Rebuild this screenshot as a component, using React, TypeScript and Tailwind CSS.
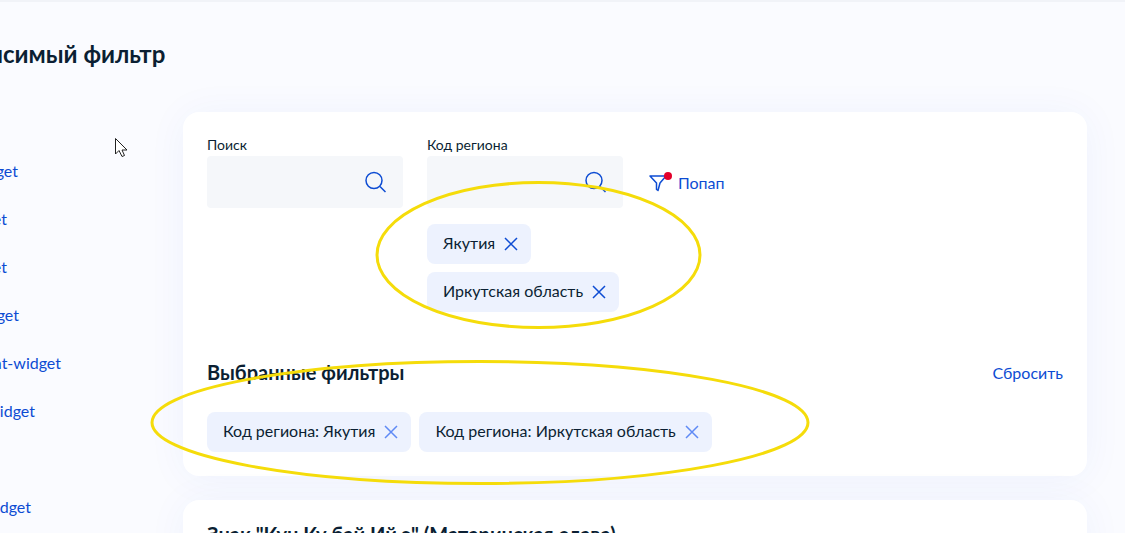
import React from "react";

const blue = "#0d4cd3";

const links = [
  { text: "filter-widget", cls: "pr-[165px]" },
  { text: "list-widget", cls: "pr-[176px]" },
  { text: "tree-widget", cls: "pr-[176px]" },
  { text: "select-widget", cls: "pr-[164px]" },
  { text: "dependent-widget", cls: "pr-[122px]" },
  { text: "chart-widget", cls: "pr-[148px]" },
  { text: "", cls: "" },
  { text: "table-widget", cls: "pr-[152px]" },
];

function X({ color }: { color: string }) {
  return (
    <svg width="16" height="16" viewBox="0 0 16 16" fill="none" className="shrink-0">
      <path d="M2 2L14 14M14 2L2 14" stroke={color} strokeWidth="1.5" />
    </svg>
  );
}

function Search() {
  return (
    <svg width="24" height="24" viewBox="0 0 24 24" fill="none" className="shrink-0">
      <circle cx="11" cy="10.5" r="8" stroke={blue} strokeWidth="1.5" />
      <path d="M17 16.5L22.5 22" stroke={blue} strokeWidth="1.5" />
    </svg>
  );
}

function Field({ label }: { label: string }) {
  return (
    <div className="w-[196px]">
      <div className="h-[18px] text-[14px] leading-[18px] text-[#0b1f33]">{label}</div>
      <div className="mt-[2px] flex h-[52px] items-center justify-end rounded bg-[#f5f7fa] pr-[16px]">
        <Search />
      </div>
    </div>
  );
}

function Chip({ text, light }: { text: string; light?: boolean }) {
  return (
    <div className="flex h-10 items-center gap-[8px] rounded-lg bg-[#edf2fe] pl-[16px] pr-[12px] text-[16px] leading-[38px] text-[#0b1f33]">
      <span className="-translate-y-px">{text}</span>
      <X color={light ? "#5f8af5" : blue} />
    </div>
  );
}

export default function App() {
  return (
    <div className="relative h-[533px] w-[1125px] overflow-hidden bg-[#fafbff] font-['Lato','Noto_Sans',sans-serif] text-[#0b1f33]">
      <div className="h-[2px] bg-[#f1f3f8]" />
      <h1 className="mt-[38px] h-[28px] -translate-x-[49px] whitespace-nowrap text-[24px] font-bold leading-[28px]">
        Зависимый фильтр
      </h1>
      <div className="mt-[44px] flex">
        <nav className="w-[183px] shrink-0 overflow-hidden pt-[35px] text-[16px] leading-[20px] text-[#0d4cd3]">
          {links.map((l, i) => (
            <div key={i} className={`flex h-12 items-center justify-end whitespace-nowrap ${l.cls}`}>
              {l.text}
            </div>
          ))}
        </nav>
        <main className="flex w-[904px] flex-col gap-6">
          <section className="h-[364px] rounded-2xl bg-white p-6 shadow-[0_2px_40px_rgba(13,76,211,0.05)]">
            <div className="flex items-start gap-6">
              <Field label="Поиск" />
              <div className="flex flex-col">
                <Field label="Код региона" />
                <div className="mt-4 flex flex-col items-start gap-2">
                  <Chip text="Якутия" />
                  <Chip text="Иркутская область" />
                </div>
              </div>
              <div className="ml-[2px] mt-[37px] flex h-[20px] items-center gap-[12px] text-[16px] leading-[20px] text-[#0d4cd3]">
                <div className="relative h-[20px] w-[18px]">
                  <svg width="18" height="20" viewBox="0 0 18 20" fill="none">
                    <path d="M1 3H17L11 10L9 17.5L7.5 16.5V10L1 3Z" stroke={blue} strokeWidth="1.5" strokeLinejoin="round" />
                  </svg>
                  <span className="absolute -right-[5px] -top-[1px] h-2 w-2 rounded-full bg-[#e3002b]" />
                </div>
                <span className="-translate-x-px">Попап</span>
              </div>
            </div>
            <div className="mt-[49px] flex h-[24px] items-center justify-between">
              <h2 className="-translate-y-px text-[20px] font-bold leading-6">Выбранные фильтры</h2>
              <a className="text-[16px] text-[#0d4cd3]">Сбросить</a>
            </div>
            <div className="mt-[27px] flex gap-2">
              <Chip text="Код региона: Якутия" light />
              <Chip text="Код региона: Иркутская область" light />
            </div>
          </section>
          <section className="h-[200px] rounded-2xl bg-white p-6 shadow-[0_2px_40px_rgba(13,76,211,0.05)]">
            <h2 className="-translate-y-0.5 text-[20px] font-bold leading-6">Знак "Кун Ку бай Ий э" (Материнская слава)</h2>
          </section>
        </main>
      </div>

      <svg className="pointer-events-none absolute left-0 top-0" width="1125" height="533" fill="none">
        <ellipse cx="538.5" cy="255" rx="161.5" ry="72.5" stroke="#f5dc0a" strokeWidth="3" />
        <ellipse cx="480" cy="422.5" rx="328" ry="61" stroke="#f5dc0a" strokeWidth="3" />
        <path d="M115.5 138.5V154L119 150.5L122 156.5L124.5 155.5L122 150H127L115.5 138.5Z" fill="#fff" stroke="#222" strokeWidth="1" />
      </svg>
    </div>
  );
}
